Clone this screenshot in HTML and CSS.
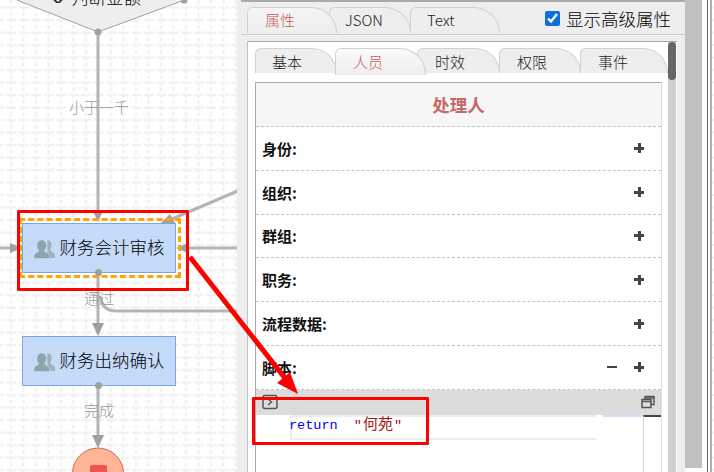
FILE: index.html
```html
<!DOCTYPE html>
<html lang="zh">
<head>
<meta charset="utf-8">
<title>流程设计</title>
<link rel="stylesheet" href="styles.css">
</head>
<body>
<div class="stage">
  <svg class="edges" width="714" height="472" viewBox="0 0 714 472">
    <defs>
      <pattern id="dots" x="0" y="0" width="12.5" height="12.5" patternUnits="userSpaceOnUse">
        <path class="grid-line" d="M0 7.500H12.500"/>
        <path class="grid-line" d="M11 0V12.500"/>
      </pattern>
    </defs>
    <rect width="714" height="472" fill="url(#dots)"/>
    <g class="edge">
      <path d="M98 32V214"/>
      <path d="M98 273V325"/>
      <path d="M98 386V437"/>
      <path d="M0 248H12"/>
      <path d="M240 248H186"/>
      <path d="M240 190L172 219"/>
      <path d="M100 296Q102 311 116 311H240"/>
    </g>
    <g class="head">
      <path d="M98 222L93 211H103Z"/>
      <path d="M98 336L92 323H104Z"/>
      <path d="M98 448L92 435H104Z"/>
      <path d="M22 248L10 243V253Z"/>
      <path d="M176 248L188 243V253Z"/>
      <path d="M160 224L170 214L175 223Z"/>
      <circle cx="184" cy="0" r="3.500"/>
    </g>
    <path class="diamond" d="M17 0L98 32L179 2L184 0"/>
    <circle class="head-dot" cx="98" cy="32" r="3.500"/>
    <circle class="end" cx="98" cy="473.500" r="25.500"/>
    <rect class="end-stop" x="90" y="465" width="17" height="12" rx="2"/>
  </svg>

  <div class="diamond-text">
    <svg class="gear" width="12" height="12" viewBox="0 0 12 12"><rect x="1.500" y="1.500" width="9" height="9" rx="1" transform="rotate(45 6 6)"/></svg>
    <span>判断金额</span>
  </div>

  <span class="edge-label label-a">小于一千</span>
  <span class="edge-label label-b">通过</span>
  <span class="edge-label label-c">完成</span>

  <div class="selection"></div>
  <div class="node node-a">
    <svg class="people" width="21" height="21" viewBox="0 0 22 20" preserveAspectRatio="none"><path class="back" d="M14 1c3 0 4.500 2 4.500 5 0 2-1 3.500-1.500 4.500 0 1 3 2 4.500 3.500 .5 1 .5 3 .5 4h-8z"/><path class="front" d="M8 1c3 0 5 2.200 5 5.500 0 2-1 3.500-2 4.500 0 1.200 3 2 5 3.500 .5 1 .5 3 .5 4H0c0-1 0-3 .5-4C2 13 5 12.200 5 11 4 10 3 8.500 3 6.500 3 3.200 5 1 8 1z"/></svg>
    <span class="node-name">财务会计审核</span>
  </div>
  <div class="node node-b">
    <svg class="people" width="21" height="21" viewBox="0 0 22 20" preserveAspectRatio="none"><path class="back" d="M14 1c3 0 4.500 2 4.500 5 0 2-1 3.500-1.500 4.500 0 1 3 2 4.500 3.500 .5 1 .5 3 .5 4h-8z"/><path class="front" d="M8 1c3 0 5 2.200 5 5.500 0 2-1 3.500-2 4.500 0 1.200 3 2 5 3.500 .5 1 .5 3 .5 4H0c0-1 0-3 .5-4C2 13 5 12.200 5 11 4 10 3 8.500 3 6.500 3 3.200 5 1 8 1z"/></svg>
    <span class="node-name">财务出纳确认</span>
  </div>

  <aside class="panel">
    <div class="panel-tabs">
      <div class="tab tab-main tab-active">属性</div>
      <div class="tab tab-main tab-json">JSON</div>
      <div class="tab tab-main tab-text">Text</div>
      <label class="advanced"><input type="checkbox" checked><span>显示高级属性</span></label>
    </div>
    <div class="sheet">
      <div class="sheet-main">
        <div class="sub-tabs">
          <div class="tab sub sub-1">基本</div>
          <div class="tab sub sub-2 tab-active">人员</div>
          <div class="tab sub sub-3">时效</div>
          <div class="tab sub sub-4">权限</div>
          <div class="tab sub sub-5">事件</div>
        </div>
        <section class="card">
          <h3 class="card-title">处理人</h3>
          <div class="row"><b>身份:</b><span class="plus"></span></div>
          <div class="row"><b>组织:</b><span class="plus"></span></div>
          <div class="row"><b>群组:</b><span class="plus"></span></div>
          <div class="row"><b>职务:</b><span class="plus"></span></div>
          <div class="row"><b>流程数据:</b><span class="plus"></span></div>
          <div class="row"><b>脚本:</b><span class="minus"></span><span class="plus"></span></div>
          <div class="toolbar">
            <svg width="16" height="16" viewBox="0 0 16 16" class="tool-run"><rect x="1" y="1.500" width="14" height="13" rx="2"/><path d="M6 5l3.500 3L6 11"/></svg>
            <svg width="14" height="14" viewBox="0 0 14 14" class="tool-max"><rect x="1" y="4.500" width="9" height="8"/><path d="M4 4.500V1.500h9v8h-3"/><path d="M1 6.500h9M4 3h9"/></svg>
          </div>
          <div class="editor">
            <div class="code-line"><span class="kw">return</span>  <span class="str">"<span class="cjk">何苑</span>"</span></div>
            <div class="strip"></div>
            <div class="minimap"></div>
          </div>
        </section>
      </div>
      <div class="scrollbar"><div class="thumb"></div></div>
    </div>
  </aside>
  <div class="side-scroll"><div class="side-thumb"></div></div>

  <div class="mark mark-node"></div>
  <div class="mark mark-code"></div>
  <svg class="mark-arrow" width="714" height="472" viewBox="0 0 714 472">
    <path d="M190 257L288 382" />
    <path class="tip" d="M298 394L277 383L290 372Z"/>
  </svg>
</div>
</body>
</html>
```
FILE: styles.css
```css
* { box-sizing: border-box; }
html, body { margin: 0; padding: 0; }
body { width: 714px; height: 472px; overflow: hidden; font-family: "Noto Sans CJK SC", "Liberation Sans", sans-serif; background: #fff; }

.stage {
  position: relative;
  width: 714px;
  height: 472px;
  overflow: hidden;
  background-color: #fff;
}

.edges, .mark-arrow { position: absolute; left: 0; top: 0; }
.grid-line { fill: none; stroke: #eeeeee; stroke-width: 2; stroke-dasharray: 4 2.250; }
.edge path { fill: none; stroke: #b5b5b5; stroke-width: 3; }
.head path, .head circle, .head-dot { fill: #a0a0a0; }
.diamond { fill: #eeeeee; stroke: #a0a0a0; stroke-width: 1; }
.end { fill: #ffb498; stroke: #c0714f; stroke-width: 1; }
.end-stop { fill: #ee5350; }

.diamond-text {
  position: absolute;
  left: 52px;
  top: -15px;
  width: 100px;
  height: 24px;
  display: flex;
  align-items: center;
  gap: 7px;
  font-size: 17.500px;
  font-weight: 300;
  line-height: 24px;
  color: #000;
}
.gear { fill: #fff; stroke: #333; stroke-width: 2; flex: none; }

.edge-label { position: absolute; font-size: 15px; font-weight: 300; line-height: 20px; color: #999; }
.label-a { left: 69px; top: 97px; }
.label-b { left: 84px; top: 288px; }
.label-c { left: 84px; top: 400px; }

.selection { position: absolute; left: 19px; top: 218px; width: 162px; height: 60px; border: 3px dashed #ffa500; }
.node {
  position: absolute;
  left: 22px;
  width: 154px;
  height: 50px;
  display: flex;
  align-items: center;
  justify-content: center;
  gap: 5px;
  background: #c5dbf9;
  border: 1px solid #7ba5e0;
  font-size: 17.500px;
  font-weight: 300;
  color: #000;
}
.node-a { top: 223px; }
.node-b { top: 336px; }
.node-name { margin-bottom: 4px; }
.node::after {
  content: "";
  position: absolute;
  left: 72px;
  bottom: -4px;
  width: 7px;
  height: 7px;
  border-radius: 50%;
  background: #a0a0a0;
}
.people { flex: none; margin-top: 2px; }
.people .back { fill: #9fb2ba; }
.people .front { fill: #8fa3ac; stroke: #c5dbf9; stroke-width: .6; }

.panel {
  position: absolute;
  left: 237px;
  top: 0;
  width: 448px;
  height: 472px;
  padding-left: 4px;
  background: #eeeeee;
  display: flex;
  flex-direction: column;
}
.panel::before {
  content: "";
  display: block;
  height: 2px;
  flex: none;
  background: #aaaaaa;
}
.panel-tabs {
  position: relative;
  height: 33px;
  flex: none;
  border-bottom: 1px solid #cccccc;
}
.tab {
  position: absolute;
  display: flex;
  align-items: center;
  background: #eeeeee;
  border: 1px solid #d0d0d0;
  border-bottom: 0;
  border-radius: 6px 26px 0 0;
  font-weight: 300;
  color: #222;
}
.tab-main { top: 5px; height: 26px; padding-bottom: 2px; font-size: 15px; }
.panel-tabs .tab-active { left: 6px; width: 90px; padding-left: 17px; z-index: 2; color: #c85a5a; background: linear-gradient(#f5f5f5, #eeeeee); }
.tab-json { left: 88px; width: 82px; padding-left: 15px; z-index: 1; }
.tab-text { left: 169px; width: 90px; padding-left: 16px; }
.advanced {
  position: absolute;
  right: 14px;
  top: 3px;
  display: flex;
  align-items: center;
  gap: 6px;
  font-size: 17.500px;
  font-weight: 300;
  line-height: 27px;
  color: #000;
}
.advanced input { margin: 0; width: 15px; height: 15px; accent-color: #0a6fe0; }

.sheet {
  display: flex;
  margin: 6px 8px 0 7px;
  flex: 1;
  min-height: 0;
  border-top: 1px solid #a8a8a8;
  background: #fff;
  box-shadow: -1px 0 0 #c0c0c0;
}
.sheet-main { width: 420px; flex: none; }
.scrollbar { width: 8px; background: #cfcfcf; position: relative; }
.thumb { height: 38px; width: 8px; border-radius: 4px; background: #666; }
.sub-tabs { position: relative; height: 34px; background: #fff; }
.sub { top: 6px; height: 25px; font-size: 15px; }
.sub-1 { left: 7px; width: 82px; padding-left: 16px; }
.sub-2 { left: 87px; width: 91px; padding-left: 17px; top: 6px; height: 27px; padding-bottom: 2px; z-index: 2; color: #c85a5a; background: linear-gradient(#fafafa, #eeeeee); }
.sub-3 { left: 169px; width: 83px; padding-left: 17px; }
.sub-4 { left: 251px; width: 82px; padding-left: 17px; }
.sub-5 { left: 332px; width: 88px; padding-left: 17px; }

.card {
  margin: 6px 7px 0 7px;
  width: 407px;
  border-top: 1px solid #aaaaaa;
  border-left: 1px solid #aaaaaa;
  border-right: 1px solid #dddddd;
}
.card-title {
  margin: 0;
  height: 44px;
  border-bottom: 1px dashed #c4c4c4;
  background: #f6f6f6;
  text-align: center;
  font-size: 17.500px;
  line-height: 44px;
  font-weight: 700;
  color: #c46a6a;
}
.row {
  height: 43.800px;
  display: flex;
  align-items: center;
  padding: 0 17px 0 6px;
  border-bottom: 1px dashed #c4c4c4;
  font-size: 15px;
  color: #111;
}
.row b { flex: 1; font-weight: 700; }
.plus {
  width: 10px;
  height: 10px;
  background:
    linear-gradient(#444, #444) center / 10px 3px no-repeat,
    linear-gradient(#444, #444) center / 3px 10px no-repeat;
}
.minus { width: 10px; height: 2px; background: #444; margin-right: 17px; }
.toolbar {
  height: 25px;
  background: #dcdcdc;
  display: flex;
  align-items: center;
  justify-content: space-between;
  padding: 0 6px;
}
.tool-run rect, .tool-run path, .tool-max rect, .tool-max path { fill: none; stroke: #555; stroke-width: 1.500; }
.editor { position: relative; height: 60px; background: #fff; }
.code-line {
  position: absolute;
  left: 34px;
  top: 0;
  width: 306px;
  height: 25px;
  border-top: 2px solid #eeeeee;
  border-bottom: 2px solid #eeeeee;
  border-left: 2px solid #eeeeee;
  text-indent: -3px;
  font-family: "Liberation Mono", "Noto Sans CJK SC", monospace;
  font-size: 13.500px;
  line-height: 17px;
  white-space: pre;
}
.kw { color: #0000ff; }
.str { color: #a31515; }
.cjk { font-size: 15px; margin: 0 1px; }
.strip {
  position: absolute;
  left: 347px;
  top: 0;
  width: 40px;
  height: 2px;
  background: #cfe3fb;
}
.minimap {
  position: absolute;
  left: 387px;
  top: 0;
  width: 18px;
  height: 60px;
  border-top: 2px solid #444;
  border-left: 1px solid #d4d4d4;
}

.side-scroll {
  position: absolute;
  left: 685px;
  top: 0;
  width: 27px;
  height: 472px;
  background: #fff;
  border-right: 2px solid #b0b0b0;
}
.side-scroll::after {
  content: "";
  position: absolute;
  left: 22px;
  top: 0;
  width: 1px;
  height: 472px;
  background: #666;
}
.side-thumb { width: 17px; height: 468px; background: #c0c0c0; }

.mark { position: absolute; border: 3px solid #ff0000; border-radius: 1px; }
.mark-node { left: 17px; top: 210px; width: 172px; height: 81px; }
.mark-code { left: 252px; top: 397px; width: 177px; height: 48px; }
.mark-arrow path { fill: none; stroke: #ff0000; stroke-width: 5; }
.mark-arrow .tip { fill: #ff0000; stroke: none; }
```
